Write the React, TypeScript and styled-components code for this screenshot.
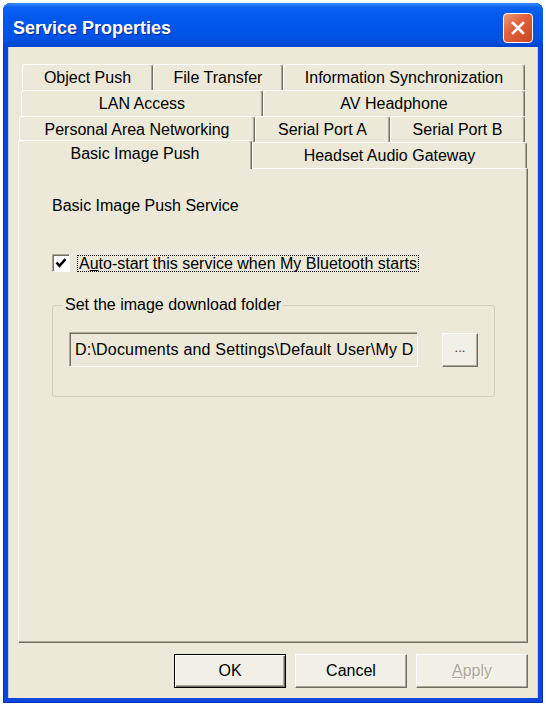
import React from 'react';
import styled, { createGlobalStyle } from 'styled-components';

const GlobalStyle = createGlobalStyle`
  body {
    margin: 0;
    background: #ffffff;
    font-family: "Liberation Sans", Arial, sans-serif;
  }
`;

interface TabDef {
  label: string;
  width: number;
  selected?: boolean;
}

const tabRows: { inset: number; tabs: TabDef[] }[] = [
  {
    inset: 4,
    tabs: [
      { label: 'Object Push', width: 131 },
      { label: 'File Transfer', width: 130 },
      { label: 'Information Synchronization', width: 242 },
    ],
  },
  {
    inset: 3,
    tabs: [
      { label: 'LAN Access', width: 242 },
      { label: 'AV Headphone', width: 262 },
    ],
  },
  {
    inset: 1,
    tabs: [
      { label: 'Personal Area Networking', width: 236 },
      { label: 'Serial Port A', width: 135 },
      { label: 'Serial Port B', width: 135 },
    ],
  },
  {
    inset: 2,
    tabs: [
      { label: 'Basic Image Push', width: 234, selected: true },
      { label: 'Headset Audio Gateway', width: 275 },
    ],
  },
];

const App: React.FC = () => {
  return (
    <>
      <GlobalStyle />
      <Window>
        <TitleBar>
          <Title>Service Properties</Title>
          <CloseButton aria-label='Close'>
            <svg width='16' height='16' viewBox='0 0 16 16'>
              <path d='M3 3 L13 13 M13 3 L3 13' stroke='#ffffff' strokeWidth='2.6' strokeLinecap='square' />
            </svg>
          </CloseButton>
        </TitleBar>
        <Client>
          <TabStrip>
            {tabRows.map((row, i) => (
              <TabRow key={i} $inset={row.inset}>
                {row.tabs.map(tab => (
                  <Tab key={tab.label} $w={tab.width} $selected={tab.selected}>
                    {tab.label}
                  </Tab>
                ))}
              </TabRow>
            ))}
          </TabStrip>
          <Panel>
            <Heading>Basic Image Push Service</Heading>
            <CheckRow>
              <CheckBox>
                <svg width='14' height='14' viewBox='0 0 14 14'>
                  <path d='M2.5 6.5 L5.5 9.8 L11.5 3.2' fill='none' stroke='#000' strokeWidth='2.6' />
                </svg>
              </CheckBox>
              <FocusLabel>
                A<u>u</u>to-start this service when My Bluetooth starts
              </FocusLabel>
            </CheckRow>
            <GroupBox>
              <Legend>Set the image download folder</Legend>
              <FolderRow>
                <PathBox>D:\Documents and Settings\Default User\My D</PathBox>
                <BrowseButton>...</BrowseButton>
              </FolderRow>
            </GroupBox>
          </Panel>
          <ButtonRow>
            <DialogButton $default>OK</DialogButton>
            <DialogButton>Cancel</DialogButton>
            <DialogButton $disabled>
              <u>A</u>pply
            </DialogButton>
          </ButtonRow>
        </Client>
      </Window>
    </>
  );
};

const Window = styled.div`
  width: 540px;
  height: 700px;
  margin: 3px 0 0 3px;
  box-sizing: border-box;
  padding: 0 5px 5px;
  display: flex;
  flex-direction: column;
  background: #0a47dc;
  border-radius: 8px 8px 0 0;
  box-shadow: inset 1px 0 #0831b8, inset -1px 0 #0831b8, inset 0 -1px #0831b8;
`;

const TitleBar = styled.div`
  height: 44px;
  margin: 0 -5px;
  padding: 6px 10px 0 10px;
  box-sizing: border-box;
  display: flex;
  align-items: center;
  border-radius: 8px 8px 0 0;
  background: linear-gradient(#3c8cff 0%, #0a62f2 10%, #0058ec 35%, #0053e4 80%, #0043cf 100%);
`;

const Title = styled.span`
  color: #ffffff;
  font-weight: bold;
  font-size: 18px;
  text-shadow: 1px 1px #0a2a9a;
`;

const CloseButton = styled.div`
  margin-left: auto;
  width: 30px;
  height: 30px;
  box-sizing: border-box;
  border: 1px solid #ffffff;
  border-radius: 4px;
  background: linear-gradient(135deg, #ef9a7c 0%, #e2623d 40%, #cc4320 100%);
  display: flex;
  align-items: center;
  justify-content: center;
`;

const Client = styled.div`
  flex: 1;
  background: #ece9d8;
  padding: 17px 10px 10px;
  display: flex;
  flex-direction: column;
  box-shadow: inset 1px 0 #b8d0f8, inset -1px 0 #b8d0f8;
`;

const TabStrip = styled.div`
  display: flex;
  flex-direction: column;
`;

const TabRow = styled.div<{ $inset: number }>`
  height: 26px;
  display: flex;
  padding-left: ${p => p.$inset}px;
`;

const Tab = styled.div<{ $w: number; $selected?: boolean }>`
  flex: none;
  width: ${p => p.$w}px;
  height: ${p => (p.$selected ? 29 : 26)}px;
  margin-top: ${p => (p.$selected ? -2 : 0)}px;
  margin-left: ${p => (p.$selected ? -2 : 0)}px;
  box-sizing: border-box;
  display: flex;
  align-items: center;
  justify-content: center;
  padding-bottom: ${p => (p.$selected ? 2 : 0)}px;
  font-size: 16px;
  color: #000000;
  background: #ece9d8;
  border-top: 1px solid #ffffff;
  border-left: 1px solid #ffffff;
  border-right: 1px solid #716f64;
  border-radius: 3px 3px 0 0;
  box-shadow: inset -1px 0 #aca899;
  position: ${p => (p.$selected ? 'relative' : 'static')};
  z-index: ${p => (p.$selected ? 1 : 0)};
`;

const Panel = styled.div`
  flex: none;
  height: 475px;
  box-sizing: border-box;
  padding: 28px 33px 0 33px;
  background: #ece9d8;
  border-top: 1px solid #ffffff;
  border-left: 1px solid #ffffff;
  border-right: 1px solid #716f64;
  border-bottom: 1px solid #716f64;
  box-shadow: inset -1px -1px #aca899;
  display: flex;
  flex-direction: column;
  font-size: 16px;
`;

const Heading = styled.div`
  line-height: 18px;
`;

const CheckRow = styled.div`
  margin-top: 39px;
  height: 18px;
  display: flex;
  align-items: center;
  gap: 7px;
`;

const CheckBox = styled.span`
  width: 18px;
  height: 18px;
  box-sizing: border-box;
  background: #ffffff;
  border: 1px solid;
  border-color: #aca899 #ffffff #ffffff #aca899;
  box-shadow: inset 1px 1px #716f64;
  display: flex;
  align-items: center;
  justify-content: center;
`;

const FocusLabel = styled.span`
  line-height: 15px;
  padding: 0 1px;
  border: 1px dotted #000000;
`;

const GroupBox = styled.fieldset`
  margin: 24px 0 0 0;
  width: 441px;
  box-sizing: border-box;
  padding: 18px 16px 29px;
  border: 1px solid #d0d0bf;
  border-radius: 3px;
`;

const Legend = styled.legend`
  margin-left: -6px;
  padding: 0 2px;
  line-height: 18px;
`;

const FolderRow = styled.div`
  display: flex;
  align-items: center;
  gap: 24px;
`;

const PathBox = styled.div`
  width: 349px;
  height: 35px;
  box-sizing: border-box;
  padding: 0 0 0 5px;
  display: flex;
  align-items: center;
  white-space: nowrap;
  overflow: hidden;
  letter-spacing: 0.2px;
  background: #ece9d8;
  border: 1px solid;
  border-color: #aca899 #ffffff #ffffff #aca899;
  box-shadow: inset 1px 1px #716f64;
`;

const BrowseButton = styled.div`
  width: 36px;
  height: 34px;
  box-sizing: border-box;
  display: flex;
  align-items: center;
  justify-content: center;
  padding-bottom: 4px;
  font-size: 13px;
  color: #333333;
  background: #f1efe6;
  border: 1px solid;
  border-color: #ffffff #716f64 #716f64 #ffffff;
  box-shadow: inset -1px -1px #aca899;
`;

const ButtonRow = styled.div`
  margin-top: 11px;
  display: flex;
  justify-content: flex-end;
  gap: 9px;
`;

const DialogButton = styled.div<{ $default?: boolean; $disabled?: boolean }>`
  width: 112px;
  height: 34px;
  box-sizing: border-box;
  display: flex;
  align-items: center;
  justify-content: center;
  font-size: 16px;
  background: #f1efe6;
  color: ${p => (p.$disabled ? '#aca899' : '#000000')};
  text-shadow: ${p => (p.$disabled ? '1px 1px #ffffff' : 'none')};
  border: 1px solid;
  border-color: ${p => (p.$default ? '#000000' : '#ffffff #716f64 #716f64 #ffffff')};
  box-shadow: ${p =>
    p.$default
      ? 'inset 1px 1px #ffffff, inset -1px -1px #716f64, inset -2px -2px #aca899'
      : 'inset -1px -1px #aca899'};
`;

export default App;
